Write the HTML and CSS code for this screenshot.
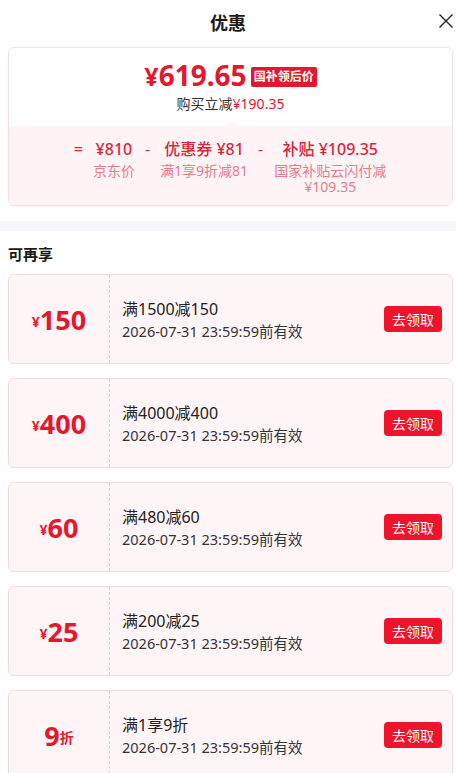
FILE: index.html
```html
<!DOCTYPE html>
<html lang="zh-CN">
<head>
<meta charset="utf-8"/>
<meta content="width=device-width, initial-scale=1.0" name="viewport"/>
<title>优惠</title>
<link rel="stylesheet" href="styles.css">
</head>
<body>
<div class="header">
  <h1>优惠</h1>
  <button class="close" aria-label="关闭">
    <svg width="16" height="16" viewBox="0 0 16 16"><path d="M1.5 1.5L14.5 14.5M14.5 1.5L1.5 14.5" stroke="#222" stroke-width="1.4" fill="none"/></svg>
  </button>
</div>

<div class="summary">
  <div class="summary-top">
    <div class="final-price"><span class="yen">¥</span>619.65<span class="badge">国补领后价</span></div>
    <div class="save">购买立减<span class="red">¥190.35</span></div>
  </div>
  <div class="summary-bottom">
    <div class="op">=</div>
    <div class="part">
      <div class="part-value">¥810</div>
      <div class="part-label">京东价</div>
    </div>
    <div class="op">-</div>
    <div class="part">
      <div class="part-value">优惠券 ¥81</div>
      <div class="part-label">满1享9折减81</div>
    </div>
    <div class="op">-</div>
    <div class="part wide">
      <div class="part-value">补贴 ¥109.35</div>
      <div class="part-label">国家补贴云闪付减¥109.35</div>
    </div>
  </div>
</div>

<div class="band"></div>

<h2 class="section-title">可再享</h2>

<div class="coupons">
  <div class="coupon">
    <div class="amount"><span class="small">¥</span>150</div>
    <div class="info">
      <div class="rule">满1500减150</div>
      <div class="date">2026-07-31 23:59:59前有效</div>
    </div>
    <button class="get">去领取</button>
  </div>
  <div class="coupon">
    <div class="amount"><span class="small">¥</span>400</div>
    <div class="info">
      <div class="rule">满4000减400</div>
      <div class="date">2026-07-31 23:59:59前有效</div>
    </div>
    <button class="get">去领取</button>
  </div>
  <div class="coupon">
    <div class="amount"><span class="small">¥</span>60</div>
    <div class="info">
      <div class="rule">满480减60</div>
      <div class="date">2026-07-31 23:59:59前有效</div>
    </div>
    <button class="get">去领取</button>
  </div>
  <div class="coupon">
    <div class="amount"><span class="small">¥</span>25</div>
    <div class="info">
      <div class="rule">满200减25</div>
      <div class="date">2026-07-31 23:59:59前有效</div>
    </div>
    <button class="get">去领取</button>
  </div>
  <div class="coupon">
    <div class="amount">9<span class="small">折</span></div>
    <div class="info">
      <div class="rule">满1享9折</div>
      <div class="date">2026-07-31 23:59:59前有效</div>
    </div>
    <button class="get">去领取</button>
  </div>
</div>
</body>
</html>
```

FILE: styles.css
```css
  body {
    margin: 0;
    font-family: "Noto Sans", "Noto Sans CJK SC", sans-serif;
    background-color: #ffffff;
    color: #222;
  }
  .header {
    position: relative;
    height: 44px;
    display: flex;
    align-items: center;
    justify-content: center;
  }
  .header h1 {
    margin: 0;
    font-size: 18px;
    font-weight: bold;
    color: #1a1a1a;
  }
  .close {
    position: absolute;
    right: 2px;
    top: 13px;
    border: none;
    background: none;
    padding: 0;
    width: 16px;
    height: 16px;
  }
  .summary {
    margin: 3px 3px 0 8px;
    border: 1px solid #f6dde2;
    border-radius: 6px;
    overflow: hidden;
  }
  .summary-top {
    text-align: center;
    padding: 11px 0 12px;
  }
  .final-price {
    font-size: 28px;
    line-height: 32px;
    font-weight: bold;
    color: #e4172d;
  }
  .final-price .yen {
    font-size: 25px;
  }
  .badge {
    display: inline-block;
    vertical-align: 5px;
    margin-left: 4px;
    padding: 0 3px;
    font-size: 12px;
    line-height: 20px;
    color: #fff;
    background-color: #e4172d;
    border-radius: 2px;
  }
  .save {
    margin-top: 2px;
    font-size: 14px;
    line-height: 20px;
    color: #333;
  }
  .red {
    color: #e4172d;
  }
  .summary-bottom {
    position: relative;
    background-color: #fff4f5;
    display: flex;
    justify-content: center;
    align-items: flex-start;
    gap: 10px;
    padding: 12px 0 10px;
  }
  .summary-bottom::before {
    content: "";
    position: absolute;
    top: -6px;
    left: 50%;
    margin-left: -6px;
    border-left: 6px solid transparent;
    border-right: 6px solid transparent;
    border-bottom: 6px solid #fff4f5;
  }
  .op {
    font-size: 16px;
    line-height: 22px;
    color: #d9263c;
  }
  .part {
    text-align: center;
  }
  .part.wide {
    width: 114px;
  }
  .part-value {
    font-size: 16px;
    line-height: 22px;
    font-weight: 500;
    color: #d9263c;
  }
  .part-label {
    margin-top: 3px;
    font-size: 14px;
    line-height: 16px;
    color: #e77b8a;
  }
  .band {
    margin-top: 15px;
    height: 10px;
    background-color: #f5f7fa;
  }
  .section-title {
    margin: 12px 0 0 8px;
    font-size: 15px;
    line-height: 22px;
    font-weight: bold;
    color: #1a1a1a;
  }
  .coupons {
    margin: 9px 3px 0 8px;
    display: flex;
    flex-direction: column;
    gap: 14px;
  }
  .coupon {
    height: 90px;
    display: flex;
    align-items: center;
    border: 1px solid #f3d9de;
    border-radius: 6px;
    background-color: #fff5f6;
    box-sizing: border-box;
  }
  .amount {
    width: 100px;
    height: 100%;
    display: flex;
    align-items: center;
    justify-content: center;
    border-right: 1px dashed #e9cbd0;
    font-size: 27px;
    font-weight: bold;
    color: #e4172d;
  }
  .amount .small {
    font-size: 14px;
    margin-top: 4px;
  }
  .info {
    flex: 1;
    padding-left: 12px;
    padding-top: 2px;
  }
  .rule {
    font-size: 16px;
    line-height: 22px;
    color: #222;
  }
  .date {
    font-size: 14.5px;
    line-height: 22px;
    color: #333;
  }
  .get {
    margin-right: 10px;
    width: 58px;
    height: 26px;
    padding: 0;
    border: none;
    border-radius: 4px;
    background-color: #f0142a;
    color: #fff;
    font-family: "Noto Sans CJK SC", sans-serif;
    font-size: 14px;
  }
```
